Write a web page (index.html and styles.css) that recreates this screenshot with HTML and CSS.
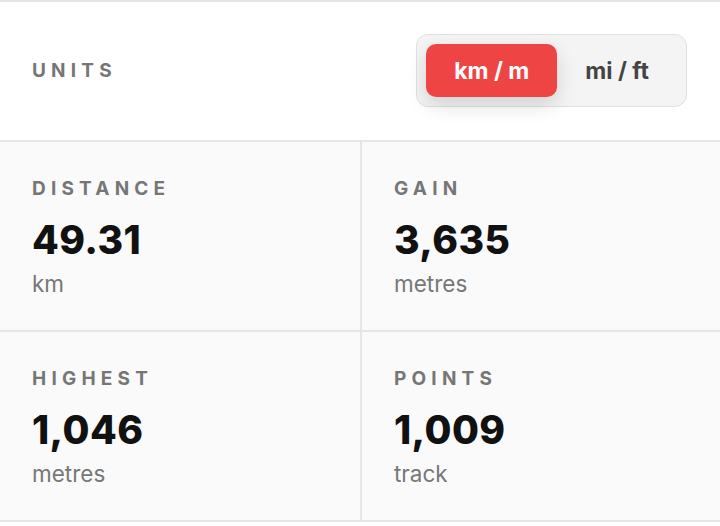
FILE: index.html
```html
<!DOCTYPE html>
<html lang="en">
<head>
<meta charset="utf-8">
<title>Route stats</title>
<link rel="stylesheet" href="styles.css">
</head>
<body>
<div class="panel">
  <div class="units-row">
    <span class="label">Units</span>
    <div class="toggle">
      <button class="opt active">km / m</button>
      <button class="opt">mi / ft</button>
    </div>
  </div>
  <div class="stats">
    <div class="cell">
      <div class="label">Distance</div>
      <div class="value">49.31</div>
      <div class="unit">km</div>
    </div>
    <div class="cell">
      <div class="label">Gain</div>
      <div class="value">3,635</div>
      <div class="unit">metres</div>
    </div>
    <div class="cell">
      <div class="label">Highest</div>
      <div class="value">1,046</div>
      <div class="unit">metres</div>
    </div>
    <div class="cell">
      <div class="label">Points</div>
      <div class="value">1,009</div>
      <div class="unit">track</div>
    </div>
  </div>
</div>
</body>
</html>
```
FILE: styles.css
```css
* { box-sizing: border-box; }
html, body { margin: 0; padding: 0; background: #fff; }
body {
  font-family: Inter, "Noto Sans", "Liberation Sans", sans-serif;
  width: 720px;
  height: 526px;
  overflow: hidden;
}
.panel {
  border-top: 2px solid #e6e6e6;
}
.units-row {
  display: flex;
  align-items: center;
  justify-content: space-between;
  padding: 32px 33px 33px 32px;
  background: #fff;
  border-bottom: 2px solid #e6e6e6;
}
.label {
  font-size: 19px;
  line-height: 24px;
  font-weight: 700;
  letter-spacing: 5.2px;
  text-transform: uppercase;
  color: #767676;
}
.toggle {
  display: flex;
  padding: 9px;
  border: 1px solid #e0e0e0;
  border-radius: 12px;
  background: #f4f4f4;
}
.opt {
  font-family: inherit;
  font-size: 23px;
  font-weight: 700;
  height: 53px;
  padding: 0 28px;
  border: 0;
  border-radius: 10px;
  background: transparent;
  color: #444;
}
.opt.active {
  background: #ef4444;
  color: #fff;
  box-shadow: 0 8px 20px rgba(0, 0, 0, 0.14);
}
.stats {
  display: grid;
  grid-template-columns: 1fr 1fr;
  background: #fafafa;
  border-bottom: 2px solid #e6e6e6;
}
.cell {
  padding: 35px 32px 32px 32px;
}
.cell:nth-child(even) { border-left: 2px solid #e6e6e6; }
.cell:nth-child(-n+2) { border-bottom: 2px solid #e6e6e6; }
.value {
  margin-top: 17px;
  font-size: 39px;
  line-height: 44px;
  font-weight: 800;
  letter-spacing: 0.4px;
  color: #111;
}
.unit {
  margin-top: 8px;
  font-size: 22.5px;
  line-height: 28px;
  color: #777;
}
```
